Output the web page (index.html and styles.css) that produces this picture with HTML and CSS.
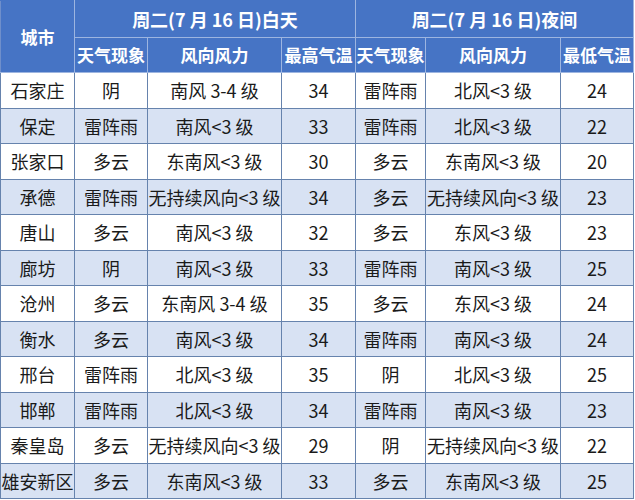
FILE: index.html
```html
<!DOCTYPE html>
<html lang="zh">
<head>
<meta charset="utf-8">
<link rel="stylesheet" href="styles.css">
</head>
<body>
<table class="wx">
<colgroup>
<col class="c1"><col class="c2"><col class="c3"><col class="c4"><col class="c5"><col class="c6"><col class="c7">
</colgroup>
<thead>
<tr class="h1">
<th rowspan="2">城市</th>
<th colspan="3">周二(7 月 16 日)白天</th>
<th colspan="3">周二(7 月 16 日)夜间</th>
</tr>
<tr class="h2">
<th>天气现象</th><th>风向风力</th><th>最高气温</th>
<th>天气现象</th><th>风向风力</th><th>最低气温</th>
</tr>
</thead>
<tbody>
<tr><td>石家庄</td><td>阴</td><td>南风 3-4 级</td><td>34</td><td>雷阵雨</td><td>北风&lt;3 级</td><td>24</td></tr>
<tr><td>保定</td><td>雷阵雨</td><td>南风&lt;3 级</td><td>33</td><td>雷阵雨</td><td>北风&lt;3 级</td><td>22</td></tr>
<tr><td>张家口</td><td>多云</td><td>东南风&lt;3 级</td><td>30</td><td>多云</td><td>东南风&lt;3 级</td><td>20</td></tr>
<tr><td>承德</td><td>雷阵雨</td><td>无持续风向&lt;3 级</td><td>34</td><td>多云</td><td>无持续风向&lt;3 级</td><td>23</td></tr>
<tr><td>唐山</td><td>多云</td><td>南风&lt;3 级</td><td>32</td><td>多云</td><td>东风&lt;3 级</td><td>23</td></tr>
<tr><td>廊坊</td><td>阴</td><td>南风&lt;3 级</td><td>33</td><td>雷阵雨</td><td>南风&lt;3 级</td><td>25</td></tr>
<tr><td>沧州</td><td>多云</td><td>东南风 3-4 级</td><td>35</td><td>多云</td><td>东风&lt;3 级</td><td>24</td></tr>
<tr><td>衡水</td><td>多云</td><td>南风&lt;3 级</td><td>34</td><td>雷阵雨</td><td>南风&lt;3 级</td><td>24</td></tr>
<tr><td>邢台</td><td>雷阵雨</td><td>北风&lt;3 级</td><td>35</td><td>阴</td><td>北风&lt;3 级</td><td>25</td></tr>
<tr><td>邯郸</td><td>雷阵雨</td><td>北风&lt;3 级</td><td>34</td><td>雷阵雨</td><td>南风&lt;3 级</td><td>23</td></tr>
<tr><td>秦皇岛</td><td>多云</td><td>无持续风向&lt;3 级</td><td>29</td><td>阴</td><td>无持续风向&lt;3 级</td><td>22</td></tr>
<tr><td>雄安新区</td><td>多云</td><td>东南风&lt;3 级</td><td>33</td><td>多云</td><td>东南风&lt;3 级</td><td>25</td></tr>
</tbody>
</table>
</body>
</html>
```

FILE: styles.css
```css
html, body {
  margin: 0;
  padding: 0;
  background: #ffffff;
}
.wx {
  border-collapse: collapse;
  table-layout: fixed;
  width: 633px;
  font-family: "Noto Sans CJK SC", "Noto Sans", sans-serif;
  font-size: 18px;
}
.c1 { width: 74px; }
.c2 { width: 73px; }
.c3 { width: 134px; }
.c4 { width: 74px; }
.c5 { width: 70px; }
.c6 { width: 135px; }
.c7 { width: 73px; }
.wx th {
  background: #4674c5;
  color: #ffffff;
  font-weight: bold;
  font-size: 17px;
  border: 1px solid #9db5e0;
  padding: 0;
  text-align: center;
  white-space: nowrap;
  overflow: hidden;
  line-height: 20px;
}
.wx .h1 th { border-top-color: #4674c5; font-size: 18px; }
.wx .h1 th:first-child { font-size: 17px; border-left-color: #6f8fcb; }
.wx .h1 { height: 37px; }
.wx .h2 { height: 35px; }
.wx td {
  border: 1px solid #6683ad;
  padding: 0;
  height: 34.5px;
  text-align: center;
  color: #1a1a1a;
  white-space: nowrap;
  overflow: hidden;
  line-height: 20px;
}
.wx tbody tr:nth-child(even) td { background: #d8e2f3; }
.wx tbody tr:nth-child(odd) td { background: #ffffff; }
```
